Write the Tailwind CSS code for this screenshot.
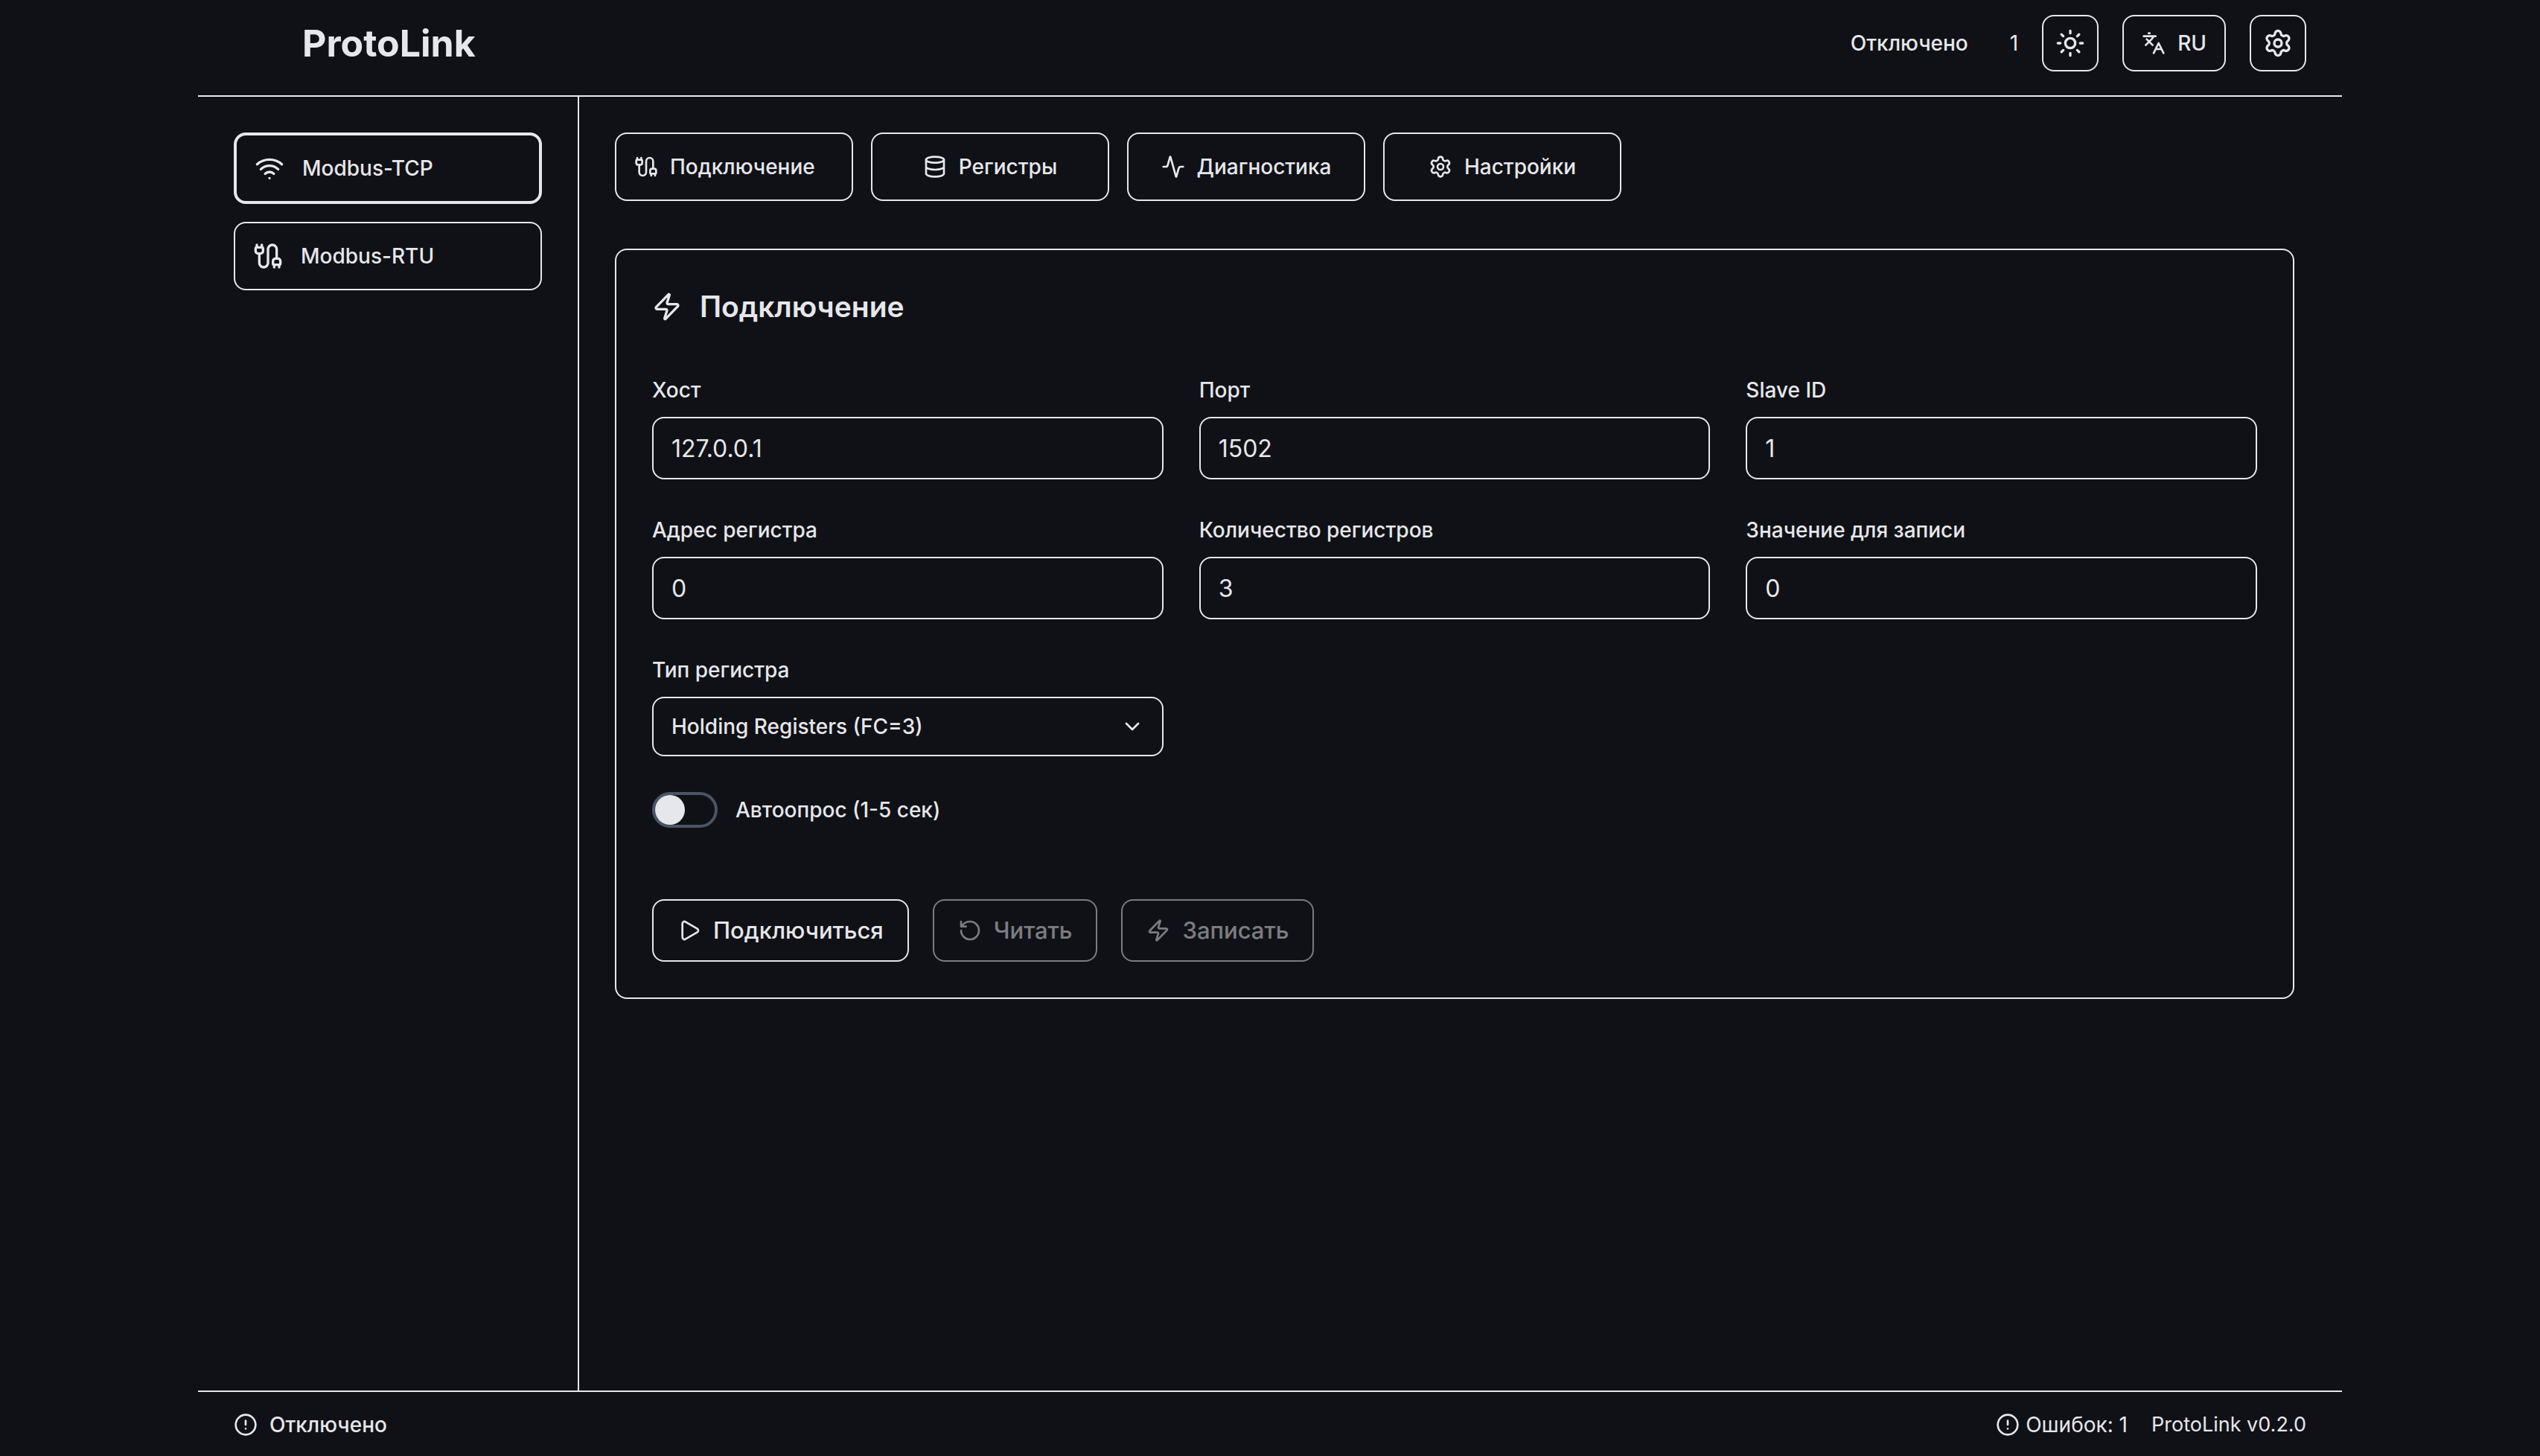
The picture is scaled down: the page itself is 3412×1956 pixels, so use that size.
<!DOCTYPE html>
<html lang="ru">
<head>
    <meta charset="UTF-8">
    <meta name="viewport" content="width=device-width, initial-scale=1.0">
    <title>ProtoLink</title>
    <script src="https://cdn.jsdelivr.net/npm/@tailwindcss/browser@4"></script>
</head>
<body class="bg-[#101116] text-[#e6e7eb] font-['Inter',sans-serif] text-[28px] leading-10 font-medium">
    <!-- icons -->
    <svg class="hidden" xmlns="http://www.w3.org/2000/svg">
        <symbol id="cable" viewBox="0 0 24 24">
            <path d="M17 19a1 1 0 0 1-1-1v-2a2 2 0 0 1 2-2h2a2 2 0 0 1 2 2v2a1 1 0 0 1-1 1z"/>
            <path d="M17 21v-2M21 21v-2M3 5V3M7 5V3"/>
            <path d="M19 14V6.5a1 1 0 0 0-7 0v11a1 1 0 0 1-7 0V10"/>
            <path d="M4 10a2 2 0 0 1-2-2V6a1 1 0 0 1 1-1h4a1 1 0 0 1 1 1v2a2 2 0 0 1-2 2z"/>
        </symbol>
        <symbol id="gear" viewBox="0 0 24 24">
            <path d="M9.671 4.136a2.34 2.34 0 0 1 4.659 0 2.34 2.34 0 0 0 3.319 1.915 2.34 2.34 0 0 1 2.33 4.033 2.34 2.34 0 0 0 0 3.831 2.34 2.34 0 0 1-2.33 4.033 2.34 2.34 0 0 0-3.319 1.915 2.34 2.34 0 0 1-4.659 0 2.34 2.34 0 0 0-3.32-1.915 2.34 2.34 0 0 1-2.33-4.033 2.34 2.34 0 0 0 0-3.831A2.34 2.34 0 0 1 6.35 6.051a2.34 2.34 0 0 0 3.319-1.915"/>
            <circle cx="12" cy="12" r="3"/>
        </symbol>
        <symbol id="zap" viewBox="0 0 24 24">
            <path d="M4 14a1 1 0 0 1-.78-1.63l9.9-10.2a.5.5 0 0 1 .86.46l-1.92 6.02A1 1 0 0 0 13 10h7a1 1 0 0 1 .78 1.63l-9.9 10.2a.5.5 0 0 1-.86-.46l1.92-6.02A1 1 0 0 0 11 14z"/>
        </symbol>
        <symbol id="alert" viewBox="0 0 24 24">
            <circle cx="12" cy="12" r="10"/>
            <path d="M12 8v4M12 16h.01"/>
        </symbol>
        <symbol id="wifi" viewBox="0 0 24 24">
            <path d="M12 20h.01M2 8.82a15 15 0 0 1 20 0M5 12.859a10 10 0 0 1 14 0M8.5 16.429a5 5 0 0 1 7 0"/>
        </symbol>
        <symbol id="sun" viewBox="0 0 24 24">
            <circle cx="12" cy="12" r="4"/>
            <path d="M12 2v2M12 20v2M4.93 4.93l1.41 1.41M17.66 17.66l1.41 1.41M2 12h2M20 12h2M6.34 17.66l-1.41 1.41M19.07 4.93l-1.41 1.41"/>
        </symbol>
        <symbol id="lang" viewBox="0 0 24 24">
            <path d="m5 8 6 6M4 14l6-6 2-3M2 5h12M7 2h1M22 22l-5-10-5 10M14 18h6"/>
        </symbol>
        <symbol id="database" viewBox="0 0 24 24">
            <ellipse cx="12" cy="5" rx="9" ry="3"/>
            <path d="M3 5v14a9 3 0 0 0 18 0V5M3 12a9 3 0 0 0 18 0"/>
        </symbol>
        <symbol id="activity" viewBox="0 0 24 24">
            <path d="M22 12h-2.48a2 2 0 0 0-1.93 1.46l-2.35 8.36a.25.25 0 0 1-.48 0L9.24 2.18a.25.25 0 0 0-.48 0l-2.35 8.36A2 2 0 0 1 4.49 12H2"/>
        </symbol>
        <symbol id="play" viewBox="0 0 24 24">
            <path d="M5 5a2 2 0 0 1 3.008-1.728l11.997 6.998a2 2 0 0 1 .003 3.458l-12 7A2 2 0 0 1 5 19z"/>
        </symbol>
        <symbol id="reload" viewBox="0 0 24 24">
            <path d="M3 12a9 9 0 1 0 9-9 9.75 9.75 0 0 0-6.74 2.74L3 8M3 3v5h5"/>
        </symbol>
    </svg>

    <div class="h-screen max-w-[2880px] mx-auto flex flex-col">
        <header class="flex items-start justify-between border-b-2 border-[#e6e7eb] pt-5 pb-8 pl-[140px] pr-12">
            <h1 class="text-[50px] leading-[76px] font-bold">ProtoLink</h1>
            <div class="flex items-center gap-8">
                <span class="mr-6">Отключено</span>
                <span class="font-normal">1</span>
                <button id="theme" type="button" aria-label="Тема" class="border-2 rounded-2xl p-4">
                    <svg class="size-10 fill-none stroke-current stroke-2" stroke-linecap="round" stroke-linejoin="round"><use href="#sun"/></svg>
                </button>
                <button type="button" class="flex items-center gap-4 border-2 rounded-2xl px-6 py-4">
                    <svg class="size-8 fill-none stroke-current stroke-2" stroke-linecap="round" stroke-linejoin="round"><use href="#lang"/></svg>
                    RU
                </button>
                <button type="button" aria-label="Настройки" class="border-2 rounded-2xl p-4">
                    <svg class="size-10 fill-none stroke-current stroke-2" stroke-linecap="round" stroke-linejoin="round"><use href="#gear"/></svg>
                </button>
            </div>
        </header>

        <div class="flex flex-1 min-h-0">
            <aside class="w-lg shrink-0 border-r-2 border-[#e6e7eb] p-12">
                <nav class="flex flex-col gap-6">
                    <button type="button" class="flex items-center gap-6 border-4 rounded-2xl p-6">
                        <svg class="size-10 fill-none stroke-current stroke-2" stroke-linecap="round" stroke-linejoin="round"><use href="#wifi"/></svg>
                        Modbus-TCP
                    </button>
                    <button type="button" class="flex items-center gap-6 border-2 rounded-2xl p-6">
                        <svg class="size-10 fill-none stroke-current stroke-2" stroke-linecap="round" stroke-linejoin="round"><use href="#cable"/></svg>
                        Modbus-RTU
                    </button>
                </nav>
            </aside>

            <main class="flex-1 min-w-0 pt-12 pl-12 pr-16">
                <div class="flex gap-6 mb-16">
                    <button type="button" class="flex w-80 items-center gap-4 border-2 rounded-2xl p-6">
                        <svg class="size-8 fill-none stroke-current stroke-2" stroke-linecap="round" stroke-linejoin="round"><use href="#cable"/></svg>
                        Подключение
                    </button>
                    <button type="button" class="flex w-80 items-center justify-center gap-4 border-2 rounded-2xl p-6">
                        <svg class="size-8 fill-none stroke-current stroke-2" stroke-linecap="round" stroke-linejoin="round"><use href="#database"/></svg>
                        Регистры
                    </button>
                    <button type="button" class="flex w-80 items-center justify-center gap-4 border-2 rounded-2xl p-6">
                        <svg class="size-8 fill-none stroke-current stroke-2" stroke-linecap="round" stroke-linejoin="round"><use href="#activity"/></svg>
                        Диагностика
                    </button>
                    <button type="button" class="flex w-80 items-center justify-center gap-4 border-2 rounded-2xl p-6">
                        <svg class="size-8 fill-none stroke-current stroke-2" stroke-linecap="round" stroke-linejoin="round"><use href="#gear"/></svg>
                        Настройки
                    </button>
                </div>

                <section class="border-2 rounded-2xl p-12">
                    <h2 class="flex items-center gap-6 mb-16 text-[39px] leading-14 font-semibold">
                        <svg class="size-10 fill-none stroke-current stroke-2" stroke-linecap="round" stroke-linejoin="round"><use href="#zap"/></svg>
                        Подключение
                    </h2>

                    <form>
                        <div class="grid grid-cols-3 gap-12">
                            <div class="flex flex-col gap-4">
                                <label for="host">Хост</label>
                                <input id="host" type="text" value="127.0.0.1" class="h-[84px] border-2 rounded-2xl px-6 text-[32px] font-normal">
                            </div>
                            <div class="flex flex-col gap-4">
                                <label for="port">Порт</label>
                                <input id="port" type="text" value="1502" class="h-[84px] border-2 rounded-2xl px-6 text-[32px] font-normal">
                            </div>
                            <div class="flex flex-col gap-4">
                                <label for="slave">Slave ID</label>
                                <input id="slave" type="text" value="1" class="h-[84px] border-2 rounded-2xl px-6 text-[32px] font-normal">
                            </div>
                            <div class="flex flex-col gap-4">
                                <label for="address">Адрес регистра</label>
                                <input id="address" type="text" value="0" class="h-[84px] border-2 rounded-2xl px-6 text-[32px] font-normal">
                            </div>
                            <div class="flex flex-col gap-4">
                                <label for="count">Количество регистров</label>
                                <input id="count" type="text" value="3" class="h-[84px] border-2 rounded-2xl px-6 text-[32px] font-normal">
                            </div>
                            <div class="flex flex-col gap-4">
                                <label for="value">Значение для записи</label>
                                <input id="value" type="text" value="0" class="h-[84px] border-2 rounded-2xl px-6 text-[32px] font-normal">
                            </div>
                            <div class="flex flex-col gap-4">
                                <label for="type">Тип регистра</label>
                                <div class="relative">
                                    <select id="type" class="appearance-none w-full h-20 border-2 rounded-2xl px-6 bg-[#101116]">
                                        <option>Holding Registers (FC=3)</option>
                                    </select>
                                    <svg class="absolute right-[26px] top-6 size-8 fill-none stroke-current stroke-2 pointer-events-none" viewBox="0 0 24 24" stroke-linecap="round" stroke-linejoin="round"><path d="m6 9 6 6 6-6"/></svg>
                                </div>
                            </div>
                        </div>

                        <div class="flex items-center gap-6 mt-12 mb-24">
                            <input id="poll" type="checkbox" role="switch" class="appearance-none flex w-22 h-12 border-4 border-gray-600 rounded-full before:content-[''] before:size-10 before:rounded-full before:bg-[#e6e7eb] checked:justify-end">
                            <label for="poll">Автоопрос (1-5 сек)</label>
                        </div>

                        <div class="flex gap-8 text-[31px]">
                            <button type="button" class="flex h-[84px] items-center gap-4 border-2 rounded-2xl px-8">
                                <svg class="size-8 fill-none stroke-current stroke-2" stroke-linecap="round" stroke-linejoin="round"><use href="#play"/></svg>
                                Подключиться
                            </button>
                            <button type="button" disabled class="flex h-[84px] items-center gap-4 border-2 rounded-2xl px-8 opacity-50">
                                <svg class="size-8 fill-none stroke-current stroke-2" stroke-linecap="round" stroke-linejoin="round"><use href="#reload"/></svg>
                                Читать
                            </button>
                            <button type="button" disabled class="flex h-[84px] items-center gap-4 border-2 rounded-2xl px-8 opacity-50">
                                <svg class="size-8 fill-none stroke-current stroke-2" stroke-linecap="round" stroke-linejoin="round"><use href="#zap"/></svg>
                                Записать
                            </button>
                        </div>
                    </form>
                </section>
            </main>
        </div>

        <footer class="flex items-center justify-between border-t-2 border-[#e6e7eb] pt-6 pb-[22px] px-12">
            <div class="flex items-center gap-4">
                <svg class="size-8 fill-none stroke-current stroke-2" stroke-linecap="round" stroke-linejoin="round"><use href="#alert"/></svg>
                <span>Отключено</span>
            </div>
            <div class="flex items-center gap-8 font-normal">
                <div class="flex items-center gap-2">
                    <svg class="size-8 fill-none stroke-current stroke-2" stroke-linecap="round" stroke-linejoin="round"><use href="#alert"/></svg>
                    <span>Ошибок: 1</span>
                </div>
                <span class="text-[27px]">ProtoLink v0.2.0</span>
            </div>
        </footer>
    </div>
</body>
</html>
